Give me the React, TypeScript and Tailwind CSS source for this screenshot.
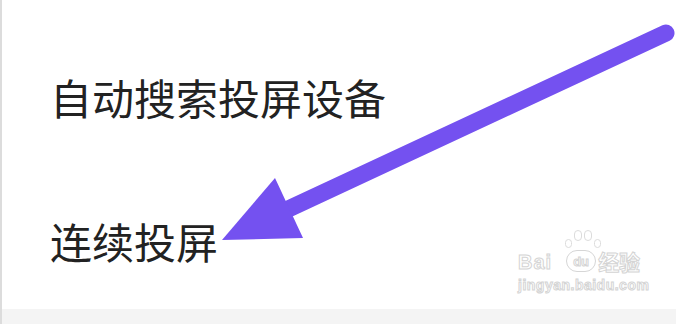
import React from "react";

function Arrow() {
  return (
    <svg
      className="pointer-events-none absolute left-0 top-0"
      width="676"
      height="324"
      viewBox="0 0 676 324"
      aria-hidden
    >
      <line
        x1="664"
        y1="33"
        x2="282"
        y2="211"
        stroke="#7451f0"
        strokeWidth="17"
        strokeLinecap="round"
      />
      <polygon points="220,240 273,178 301,238" fill="#7451f0" />
    </svg>
  );
}

function Watermark() {
  const outline =
    "text-white [-webkit-text-stroke:1px_#d4d4d4] [font-family:'Liberation_Sans',Arial,sans-serif]";
  return (
    <div className="pointer-events-none absolute left-[516px] top-[250px] flex flex-col">
      <div className="flex items-end">
        <span className={`${outline} text-[20px] font-bold leading-none tracking-[1px]`}>Bai</span>
        <span className="relative ml-[14px] flex h-[22px] w-[30px] items-center justify-center rounded-full border border-[#d6d6d6]">
          <span className="absolute -top-[21px] left-[-2px] flex gap-[2px]">
            <span className="mt-[9px] h-[9px] w-[7px] rounded-full border border-[#dcdcdc]" />
            <span className="h-[11px] w-[8px] rounded-full border border-[#dcdcdc]" />
            <span className="h-[11px] w-[8px] rounded-full border border-[#dcdcdc]" />
            <span className="mt-[9px] h-[9px] w-[7px] rounded-full border border-[#dcdcdc]" />
          </span>
          <span className={`${outline} text-[13px] font-bold leading-none`}>du</span>
        </span>
        <span className="ml-[2px] text-[21px] font-bold leading-none text-white [-webkit-text-stroke:1px_#d4d4d4] [font-family:'Noto_Sans_CJK_SC',sans-serif]">
          经验
        </span>
      </div>
      <span className={`${outline} mt-[6px] text-[14px] font-bold leading-none tracking-[0.5px]`}>
        jingyan.baidu.com
      </span>
    </div>
  );
}

export default function App() {
  return (
    <div className="relative flex h-[324px] w-[676px] flex-col overflow-hidden border-l-2 border-[#dcdcdc] bg-white [font-family:'Noto_Sans_CJK_SC','Noto_Sans',sans-serif] text-[#222222]">
      <div className="flex flex-1 flex-col pl-[48px] pt-[76px]">
        <p className="text-[42px] leading-[42px]">自动搜索投屏设备</p>
        <p className="mt-[102px] text-[42px] leading-[42px]">连续投屏</p>
      </div>
      <div className="h-[15px] bg-[#f4f4f4]" />
      <Watermark />
      <Arrow />
    </div>
  );
}
